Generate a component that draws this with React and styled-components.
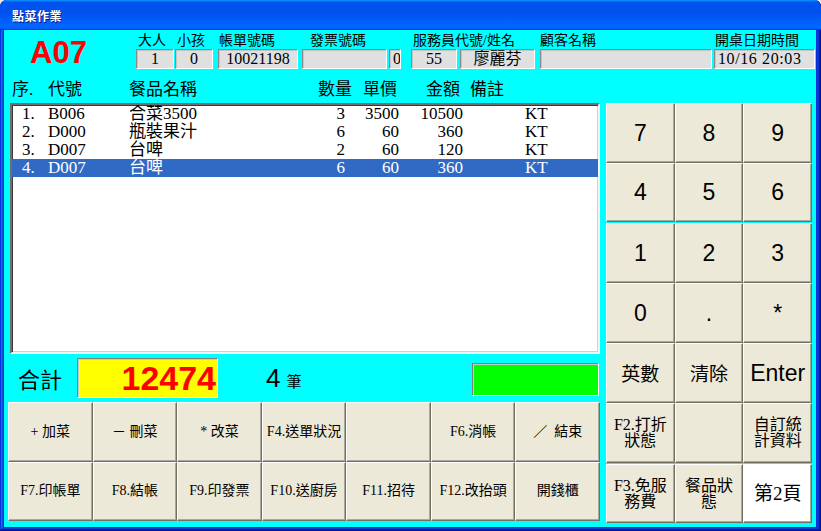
import React from "react";
import styled, { createGlobalStyle } from "styled-components";

const SERIF = `"Liberation Serif", "Noto Sans CJK TC", serif`;
const SANS = `"Liberation Sans", "Noto Sans CJK TC", sans-serif`;
const CJK = `"Noto Sans CJK TC", "Liberation Sans", sans-serif`;

const GlobalStyle = createGlobalStyle`
  html, body { margin: 0; padding: 0; background: #f1efe4; }
  body { width: 821px; height: 531px; overflow: hidden; font-family: ${SERIF}; }
  *, *::before, *::after { box-sizing: border-box; }
`;

const Window = styled.div`
  width: 821px;
  height: 531px;
  display: flex;
  flex-direction: column;
  background: #0831d9;
  border-radius: 7px 7px 0 0;
  overflow: hidden;
  box-shadow: inset -1px -1px #00138c, inset 1px 1px #0831d9,
    inset -2px -2px #001ea0, inset 2px 2px #166aee, inset -3px -3px #003bda,
    inset 3px 3px #0855dd;
`;

const TitleBar = styled.div`
  height: 30px;
  flex: none;
  display: flex;
  align-items: center;
  padding: 2px 0 0 12px;
  background: linear-gradient(
    180deg,
    #0997ff,
    #0053ee 8%,
    #0050ee 40%,
    #06f 88%,
    #06f 93%,
    #005bff 95%,
    #003dd7 96%,
    #003dd7
  );
  color: #fff;
  font-family: ${CJK};
  font-weight: 700;
  font-size: 12px;
  line-height: 14px;
  text-shadow: 1px 1px #0f1089;
  letter-spacing: 0.5px;
`;

const Client = styled.div`
  flex: 1;
  margin: 0 5px 4px 4px;
  background: #00ffff;
  overflow: hidden;
  display: flex;
  flex-direction: column;
`;

const TopArea = styled.div`
  height: 51px;
  flex: none;
  display: flex;
  padding-top: 2px;
`;

const TableNo = styled.div`
  width: 132px;
  flex: none;
  padding-left: 26px;
  margin-top: 5px;
  height: 32px;
  line-height: 32px;
  font-family: ${SANS};
  font-weight: 700;
  font-size: 31px;
  color: #ff0000;
`;

const FieldGroup = styled.div`
  display: flex;
  flex-direction: column;
  flex: none;
  margin-left: ${(p) => p.$ml || 0}px;
`;

const FieldLabel = styled.div`
  font-size: 14px;
  line-height: 17px;
  height: 17px;
  padding-left: ${(p) => p.$indent || 0}px;
  white-space: nowrap;
  color: #000;
`;

const FieldInputs = styled.div`
  display: flex;
  gap: ${(p) => p.$gap || 0}px;
`;

const Field = styled.div`
  width: ${(p) => p.$w}px;
  height: 20px;
  flex: none;
  background: #e0e0e0;
  border: 1px solid;
  border-color: #8a8a8a #ffffff #ffffff #8a8a8a;
  box-shadow: inset 1px 1px 0 #c4c4c4;
  font-size: 16px;
  line-height: 18px;
  letter-spacing: ${(p) => p.$spacing || 0}px;
  text-align: ${(p) => p.$align || "center"};
  padding: 0 ${(p) => (p.$align === "left" ? 3 : 0)}px;
  white-space: pre;
  overflow: hidden;
  color: #000;
`;

const HeaderRow = styled.div`
  height: 18px;
  flex: none;
  display: grid;
  grid-template-columns: 36px 81px 189px 45px 63px 44px auto;
  padding-left: 8px;
  font-size: 17px;
  line-height: 18px;
  color: #000;
  white-space: nowrap;
`;

const Main = styled.div`
  margin-top: 4px;
  height: 420px;
  flex: none;
  display: flex;
  gap: 6px;
  padding: 0 4px;
`;

const LeftCol = styled.div`
  width: 592px;
  flex: none;
  display: flex;
  flex-direction: column;
`;

const ListBox = styled.div`
  margin-left: 2px;
  height: 251px;
  flex: none;
  background: #fff;
  border: 2px solid;
  border-color: #6f6f6f #f4f4f4 #f4f4f4 #6f6f6f;
  box-shadow: inset 1px 1px 0 #3a3a3a, inset -1px -1px 0 #d4d0c8;
  overflow: hidden;
`;

const ListRow = styled.div`
  height: 18px;
  display: grid;
  grid-template-columns: 26px 81px 171px 45px 54px 64px 62px auto;
  padding-left: 10px;
  font-size: 17px;
  line-height: 18px;
  white-space: nowrap;
  background: ${(p) => (p.$selected ? "#316ac5" : "transparent")};
  color: ${(p) => (p.$selected ? "#fff" : "#000")};
`;

const Cell = styled.span`
  text-align: ${(p) => (p.$right ? "right" : "left")};
`;

const TotalRow = styled.div`
  height: 48px;
  flex: none;
  display: flex;
  align-items: center;
  padding-left: 10px;
`;

const TotalLabel = styled.div`
  font-family: ${CJK};
  font-size: 22px;
  line-height: 24px;
  color: #000;
`;

const TotalBox = styled.div`
  margin-left: 15px;
  width: 141px;
  height: 40px;
  background: #ffff00;
  border: 1px solid;
  border-color: #808080 #fff #fff #808080;
  box-shadow: inset 1px 1px 0 #c8c8c8;
  text-align: right;
  padding-right: 1px;
  font-family: ${SANS};
  font-weight: 700;
  font-size: 34px;
  line-height: 38px;
  color: #ff0000;
`;

const CountBox = styled.div`
  margin-left: 48px;
  display: flex;
  align-items: baseline;
  color: #000;
`;

const CountNum = styled.span`
  font-family: ${SANS};
  font-size: 26px;
  line-height: 28px;
`;

const CountUnit = styled.span`
  font-family: ${CJK};
  font-size: 15px;
  margin-left: 6px;
`;

const StatusBox = styled.div`
  margin-left: auto;
  margin-right: 1px;
  margin-top: 2px;
  width: 127px;
  height: 33px;
  background: #00ff00;
  border: 1px solid;
  border-color: #808080 #fff #fff #808080;
  box-shadow: inset 1px 1px 0 #c8c8c8;
`;

const ButtonGrid = styled.div`
  height: 119px;
  flex: none;
  display: grid;
  grid-template-columns: repeat(7, 1fr);
  grid-template-rows: repeat(2, 1fr);
`;

const Button = styled.div`
  display: flex;
  align-items: center;
  justify-content: center;
  text-align: center;
  white-space: pre;
  background: ${(p) => (p.$white ? "#ffffff" : "#ece9d8")};
  border: 1px solid;
  border-color: #ffffff #716f64 #716f64 #ffffff;
  box-shadow: inset -1px -1px 0 #aca899;
  color: #000;
  font-family: ${(p) => p.$font || SERIF};
  font-size: ${(p) => p.$size || 14}px;
  line-height: ${(p) => p.$lh || 16}px;
`;

const Keypad = styled.div`
  width: 206px;
  flex: none;
  display: flex;
  flex-direction: column;
  gap: 1px;
`;

const KeyGroup = styled.div`
  height: ${(p) => p.$h}px;
  flex: none;
  display: grid;
  grid-template-columns: repeat(3, 1fr);
  grid-template-rows: repeat(${(p) => p.$rows}, 1fr);
`;

const topFields = [
  { label: "大人", indent: 2, ml: 0, inputs: [{ w: 38, v: "1" }] },
  { label: "小孩", indent: 2, ml: 1, inputs: [{ w: 38, v: "0" }] },
  { label: "帳單號碼", indent: 1, ml: 5, inputs: [{ w: 80, v: "10021198" }] },
  {
    label: "發票號碼",
    indent: 8,
    ml: 4,
    gap: 2,
    inputs: [
      { w: 85, v: "" },
      { w: 12, v: "0", align: "left" },
    ],
  },
  {
    label: "服務員代號/姓名",
    indent: 2,
    ml: 10,
    gap: 3,
    inputs: [
      { w: 46, v: "55" },
      { w: 75, v: "廖麗芬" },
    ],
  },
  { label: "顧客名稱", indent: 0, ml: 5, inputs: [{ w: 172, v: "" }] },
  {
    label: "開桌日期時間",
    indent: 1,
    ml: 2,
    gap: 2,
    inputs: [
      { w: 101, v: "10/16 20:03", align: "left", spacing: 0.6 },
      { w: 12, v: "" },
    ],
  },
];

const items = [
  { seq: "1.", code: "B006", name: "合菜3500", qty: 3, price: 3500, amount: 10500, note: "KT" },
  { seq: "2.", code: "D000", name: "瓶裝果汁", qty: 6, price: 60, amount: 360, note: "KT" },
  { seq: "3.", code: "D007", name: "台啤", qty: 2, price: 60, amount: 120, note: "KT" },
  { seq: "4.", code: "D007", name: "台啤", qty: 6, price: 60, amount: 360, note: "KT", selected: true },
];

const actionButtons = [
  "+ 加菜",
  "－ 刪菜",
  "* 改菜",
  "F4.送單狀況",
  "",
  "F6.消帳",
  "／  結束",
  "F7.印帳單",
  "F8.結帳",
  "F9.印發票",
  "F10.送廚房",
  "F11.招待",
  "F12.改抬頭",
  "開錢櫃",
];

const NUM = { font: SANS, size: 23, lh: 26 };
const BIG_CJK = { font: CJK, size: 19, lh: 22 };
const SMALL2 = { font: SERIF, size: 16, lh: 16 };

const keyGroups = [
  {
    h: 119,
    rows: 2,
    keys: ["7", "8", "9", "4", "5", "6"].map((t) => ({ t, ...NUM })),
  },
  {
    h: 240,
    rows: 4,
    keys: [
      ...["1", "2", "3", "0", ".", "*"].map((t) => ({ t, ...NUM })),
      { t: "英數", ...BIG_CJK },
      { t: "清除", ...BIG_CJK },
      { t: "Enter", ...NUM },
      { t: "F2.打折\n狀態", ...SMALL2 },
      { t: "", ...SMALL2 },
      { t: "自訂統\n計資料", ...SMALL2 },
    ],
  },
  {
    h: 59,
    rows: 1,
    keys: [
      { t: "F3.免服\n務費", ...SMALL2 },
      { t: "餐品狀\n態", ...SMALL2 },
      { t: "第2頁", font: SERIF, size: 19, lh: 22, white: true },
    ],
  },
];

export default function App() {
  return (
    <>
      <GlobalStyle />
      <Window>
        <TitleBar>點菜作業</TitleBar>
        <Client>
          <TopArea>
            <TableNo>A07</TableNo>
            {topFields.map((g) => (
              <FieldGroup key={g.label} $ml={g.ml}>
                <FieldLabel $indent={g.indent}>{g.label}</FieldLabel>
                <FieldInputs $gap={g.gap}>
                  {g.inputs.map((f, i) => (
                    <Field key={i} $w={f.w} $align={f.align} $spacing={f.spacing}>
                      {f.v}
                    </Field>
                  ))}
                </FieldInputs>
              </FieldGroup>
            ))}
          </TopArea>

          <HeaderRow>
            <span>序.</span>
            <span>代號</span>
            <span>餐品名稱</span>
            <span>數量</span>
            <span>單價</span>
            <span>金額</span>
            <span>備註</span>
          </HeaderRow>

          <Main>
            <LeftCol>
              <ListBox>
                {items.map((it) => (
                  <ListRow key={it.seq} $selected={it.selected}>
                    <Cell>{it.seq}</Cell>
                    <Cell>{it.code}</Cell>
                    <Cell>{it.name}</Cell>
                    <Cell $right>{it.qty}</Cell>
                    <Cell $right>{it.price}</Cell>
                    <Cell $right>{it.amount}</Cell>
                    <Cell />
                    <Cell>{it.note}</Cell>
                  </ListRow>
                ))}
              </ListBox>

              <TotalRow>
                <TotalLabel>合計</TotalLabel>
                <TotalBox>12474</TotalBox>
                <CountBox>
                  <CountNum>4</CountNum>
                  <CountUnit>筆</CountUnit>
                </CountBox>
                <StatusBox />
              </TotalRow>

              <ButtonGrid>
                {actionButtons.map((t, i) => (
                  <Button key={i}>{t}</Button>
                ))}
              </ButtonGrid>
            </LeftCol>

            <Keypad>
              {keyGroups.map((g, gi) => (
                <KeyGroup key={gi} $h={g.h} $rows={g.rows}>
                  {g.keys.map((k, ki) => (
                    <Button
                      key={ki}
                      $font={k.font}
                      $size={k.size}
                      $lh={k.lh}
                      $white={k.white}
                    >
                      {k.t}
                    </Button>
                  ))}
                </KeyGroup>
              ))}
            </Keypad>
          </Main>
        </Client>
      </Window>
    </>
  );
}
